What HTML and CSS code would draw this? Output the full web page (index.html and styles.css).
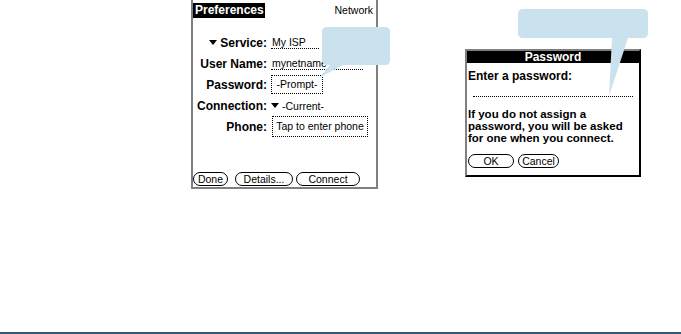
FILE: index.html
```html
<!DOCTYPE html>
<html lang="en">
<head>
    <meta charset="UTF-8">
    <meta name="viewport" content="width=device-width, initial-scale=1.0">
    <title>Network preferences</title>
    <link rel="stylesheet" href="styles.css">
</head>
<body>
    <div class="page">
        <div class="figures">
            <!-- network preferences screen -->
            <section class="screen">
                <div class="titlebar">
                    <span class="title-tab">Preferences</span>
                    <span class="title-right">Network</span>
                </div>
                <div class="form">
                    <span class="label"><i class="arrow"></i>Service:</span>
                    <span class="value"><span class="underline service">My ISP</span></span>

                    <span class="label">User Name:</span>
                    <span class="value"><span class="underline user">mynetname</span></span>

                    <span class="label">Password:</span>
                    <span class="value"><span class="field prompt">-Prompt-</span></span>

                    <span class="label">Connection:</span>
                    <span class="value"><i class="arrow"></i>-Current-</span>

                    <span class="label">Phone:</span>
                    <span class="value"><span class="field phone">Tap to enter phone</span></span>
                </div>
                <div class="buttons">
                    <button class="btn btn-done">Done</button>
                    <button class="btn btn-details">Details...</button>
                    <button class="btn btn-connect">Connect</button>
                </div>
            </section>

            <!-- password dialog -->
            <section class="dialog">
                <div class="dialog-title">Password</div>
                <div class="dialog-body">
                    <p class="prompt-text">Enter a password:</p>
                    <div class="entry-line"></div>
                    <p class="note">If you do not assign a<br>password, you will be asked<br>for one when you connect.</p>
                    <div class="dialog-buttons">
                        <button class="btn btn-ok">OK</button>
                        <button class="btn btn-cancel">Cancel</button>
                    </div>
                </div>
            </section>
        </div>
        <div class="rule"></div>

        <!-- callouts lie over both screens -->
        <svg class="callouts" width="681" height="334" viewBox="0 0 681 334">
            <path d="M327,27 H385 Q390,27 390,32 V60 Q390,65 385,65 H343 L319,78 L330,65 H327 Q322,65 322,60 V32 Q322,27 327,27 Z"/>
            <path d="M523,9 H643 Q648,9 648,14 V33 Q648,38 643,38 H628 L609,96 L612,38 H523 Q518,38 518,33 V14 Q518,9 523,9 Z"/>
        </svg>
    </div>
</body>
</html>
```

FILE: styles.css
```css
* {
    box-sizing: border-box;
}

body {
    margin: 0;
    padding: 0;
    background-color: #fff;
    color: #000;
    font-family: "Liberation Sans", Arial, sans-serif;
    font-size: 10.5px;
}

.page {
    position: relative;
    width: 681px;
    height: 334px;
    display: flex;
    flex-direction: column;
}

.figures {
    flex: 1;
    display: flex;
    align-items: flex-start;
    padding-left: 191px;
}

.rule {
    height: 2px;
    background-color: #2d5a78;
}

/* preferences screen */
.screen {
    width: 187px;
    height: 189px;
    border: 2px solid #808080;
    border-top: 0;
    display: flex;
    flex-direction: column;
}

.titlebar {
    display: flex;
    justify-content: space-between;
    margin-top: 3px;
    height: 15px;
}

.title-tab {
    width: 72px;
    padding-left: 2px;
    background-color: #000;
    color: #fff;
    font-size: 12px;
    font-weight: bold;
    line-height: 15px;
}

.title-right {
    padding-right: 3px;
    line-height: 15px;
}

.form {
    display: grid;
    grid-template-columns: 74px auto;
    grid-auto-rows: 21px;
    column-gap: 4px;
    align-items: center;
    margin-top: 14px;
}

.label {
    display: flex;
    justify-content: flex-end;
    align-items: center;
    font-size: 12px;
    font-weight: bold;
    line-height: 12px;
    white-space: nowrap;
}

.value {
    display: flex;
    align-items: center;
    line-height: 12px;
    white-space: nowrap;
}

.arrow {
    width: 0;
    height: 0;
    margin-right: 3px;
    border-left: 4px solid transparent;
    border-right: 4px solid transparent;
    border-top: 5px solid #000;
}

.underline {
    display: inline-block;
    padding-left: 1px;
    border-bottom: 1px dotted #000;
    overflow: hidden;
}

.service {
    width: 48px;
}

.user {
    width: 92px;
}

.field {
    display: inline-block;
    border: 1px dotted #000;
    text-align: center;
}

.prompt {
    width: 52px;
    height: 19px;
    line-height: 17px;
}

.phone {
    width: 96px;
    height: 21px;
    line-height: 19px;
    margin-left: 1px;
}

.buttons {
    display: flex;
    margin-top: auto;
    margin-bottom: 1px;
}

.btn {
    height: 14px;
    padding: 0;
    border: 1px solid #000;
    border-radius: 7px;
    background-color: #fff;
    color: #000;
    font-family: "Liberation Sans", Arial, sans-serif;
    font-size: 10.5px;
    line-height: 12px;
}

.btn-done {
    width: 35px;
}

.btn-details {
    width: 58px;
    margin-left: 7px;
}

.btn-connect {
    width: 64px;
    margin-left: 3px;
}

/* password dialog */
.dialog {
    width: 176px;
    margin-top: 49px;
    margin-left: 87px;
    border: 2px solid #808080;
    border-right-color: #000;
    border-bottom-color: #000;
}

.dialog-title {
    height: 12px;
    background-color: #000;
    color: #fff;
    text-align: center;
    font-size: 12px;
    font-weight: bold;
    line-height: 12px;
}

.dialog-body {
    padding: 0 0 7px 0;
    font-size: 12px;
    font-weight: bold;
    line-height: 12px;
}

.prompt-text {
    margin: 7px 0 0 1px;
}

.entry-line {
    margin: 14px 6px 0 6px;
    border-bottom: 1px dotted #000;
}

.note {
    margin: 11px 0 0 1px;
    font-size: 11.5px;
}

.dialog-buttons {
    display: flex;
    gap: 4px;
    margin-top: 10px;
    margin-left: 1px;
}

.btn-ok {
    width: 46px;
}

.btn-cancel {
    width: 41px;
}

.callouts {
    position: absolute;
    top: 0;
    left: 0;
    pointer-events: none;
}

.callouts path {
    fill: #cae2ee;
}
```
